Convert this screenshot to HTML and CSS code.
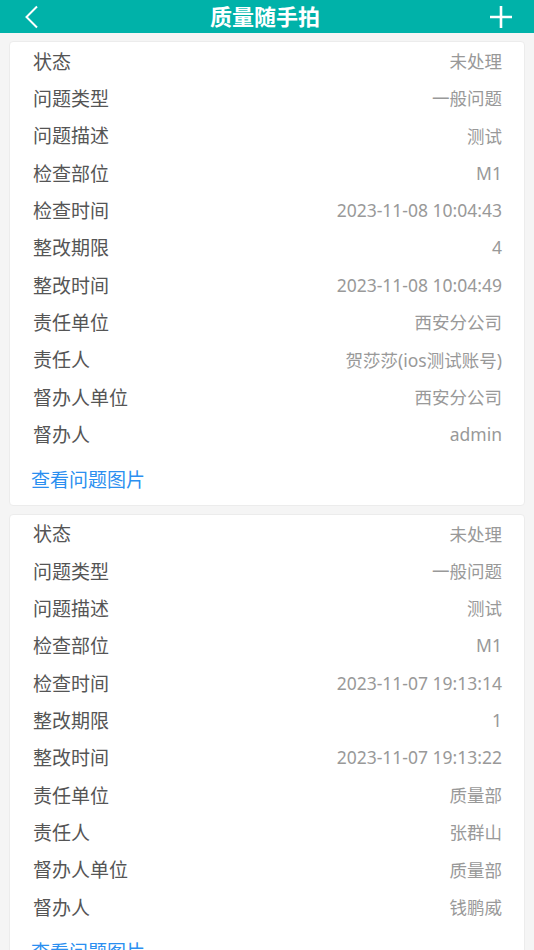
FILE: index.html
```html
<!DOCTYPE html>
<html lang="zh-CN">
<head>
    <meta charset="UTF-8">
    <meta name="viewport" content="width=device-width, initial-scale=1.0">
    <title>质量随手拍</title>
    <link rel="stylesheet" href="styles.css">
</head>
<body>
    <header class="topbar">
        <span class="topbar-btn">
            <svg width="20" height="26" viewBox="0 0 20 26"><polyline points="15,2.5 4.5,13 15,23.5" fill="none" stroke="#fff" stroke-width="2"/></svg>
        </span>
        <h1 class="topbar-title">质量随手拍</h1>
        <span class="topbar-btn">
            <svg width="26" height="26" viewBox="0 0 26 26"><path d="M2 13H24M13 2V24" stroke="#fff" stroke-width="2.6" fill="none"/></svg>
        </span>
    </header>

    <div class="list">
        <div class="card">
            <div class="row"><span class="label">状态</span><span class="value">未处理</span></div>
            <div class="row"><span class="label">问题类型</span><span class="value">一般问题</span></div>
            <div class="row"><span class="label">问题描述</span><span class="value">测试</span></div>
            <div class="row"><span class="label">检查部位</span><span class="value">M1</span></div>
            <div class="row"><span class="label">检查时间</span><span class="value">2023-11-08 10:04:43</span></div>
            <div class="row"><span class="label">整改期限</span><span class="value">4</span></div>
            <div class="row"><span class="label">整改时间</span><span class="value">2023-11-08 10:04:49</span></div>
            <div class="row"><span class="label">责任单位</span><span class="value">西安分公司</span></div>
            <div class="row"><span class="label">责任人</span><span class="value">贺莎莎(ios测试账号)</span></div>
            <div class="row"><span class="label">督办人单位</span><span class="value">西安分公司</span></div>
            <div class="row"><span class="label">督办人</span><span class="value">admin</span></div>
            <div class="link-row"><a href="#" class="link">查看问题图片</a></div>
        </div>

        <div class="card">
            <div class="row"><span class="label">状态</span><span class="value">未处理</span></div>
            <div class="row"><span class="label">问题类型</span><span class="value">一般问题</span></div>
            <div class="row"><span class="label">问题描述</span><span class="value">测试</span></div>
            <div class="row"><span class="label">检查部位</span><span class="value">M1</span></div>
            <div class="row"><span class="label">检查时间</span><span class="value">2023-11-07 19:13:14</span></div>
            <div class="row"><span class="label">整改期限</span><span class="value">1</span></div>
            <div class="row"><span class="label">整改时间</span><span class="value">2023-11-07 19:13:22</span></div>
            <div class="row"><span class="label">责任单位</span><span class="value">质量部</span></div>
            <div class="row"><span class="label">责任人</span><span class="value">张群山</span></div>
            <div class="row"><span class="label">督办人单位</span><span class="value">质量部</span></div>
            <div class="row"><span class="label">督办人</span><span class="value">钱鹏威</span></div>
            <div class="link-row"><a href="#" class="link">查看问题图片</a></div>
        </div>
    </div>
</body>
</html>
```

FILE: styles.css
```css
body {
    margin: 0;
    font-family: "Noto Sans", "Noto Sans CJK SC", sans-serif;
    background-color: #f5f5f5;
}

.topbar {
    height: 33px;
    background-color: #00b2a9;
    display: flex;
    align-items: center;
    justify-content: space-between;
    padding: 0 20px 0 22px;
}

.topbar-btn {
    display: flex;
    align-items: center;
}

.topbar-title {
    margin: 0;
    color: #fff;
    font-size: 22px;
    font-weight: bold;
    line-height: 33px;
}

.list {
    padding: 8px 9px 0;
    display: flex;
    flex-direction: column;
    gap: 8px;
}

.card {
    background-color: #fff;
    border: 1px solid #ececec;
    border-radius: 4px;
    padding: 0 22px 0 23px;
}

.row {
    height: 37.33px;
    display: flex;
    align-items: center;
    justify-content: space-between;
}

.label {
    color: #555;
    font-size: 19px;
}

.value {
    color: #999;
    font-size: 17.5px;
}

.link-row {
    height: 52px;
    padding-top: 12px;
    box-sizing: border-box;
}

.link {
    color: #2b8ff0;
    font-size: 19px;
    text-decoration: none;
    margin-left: -2px;
}
```
